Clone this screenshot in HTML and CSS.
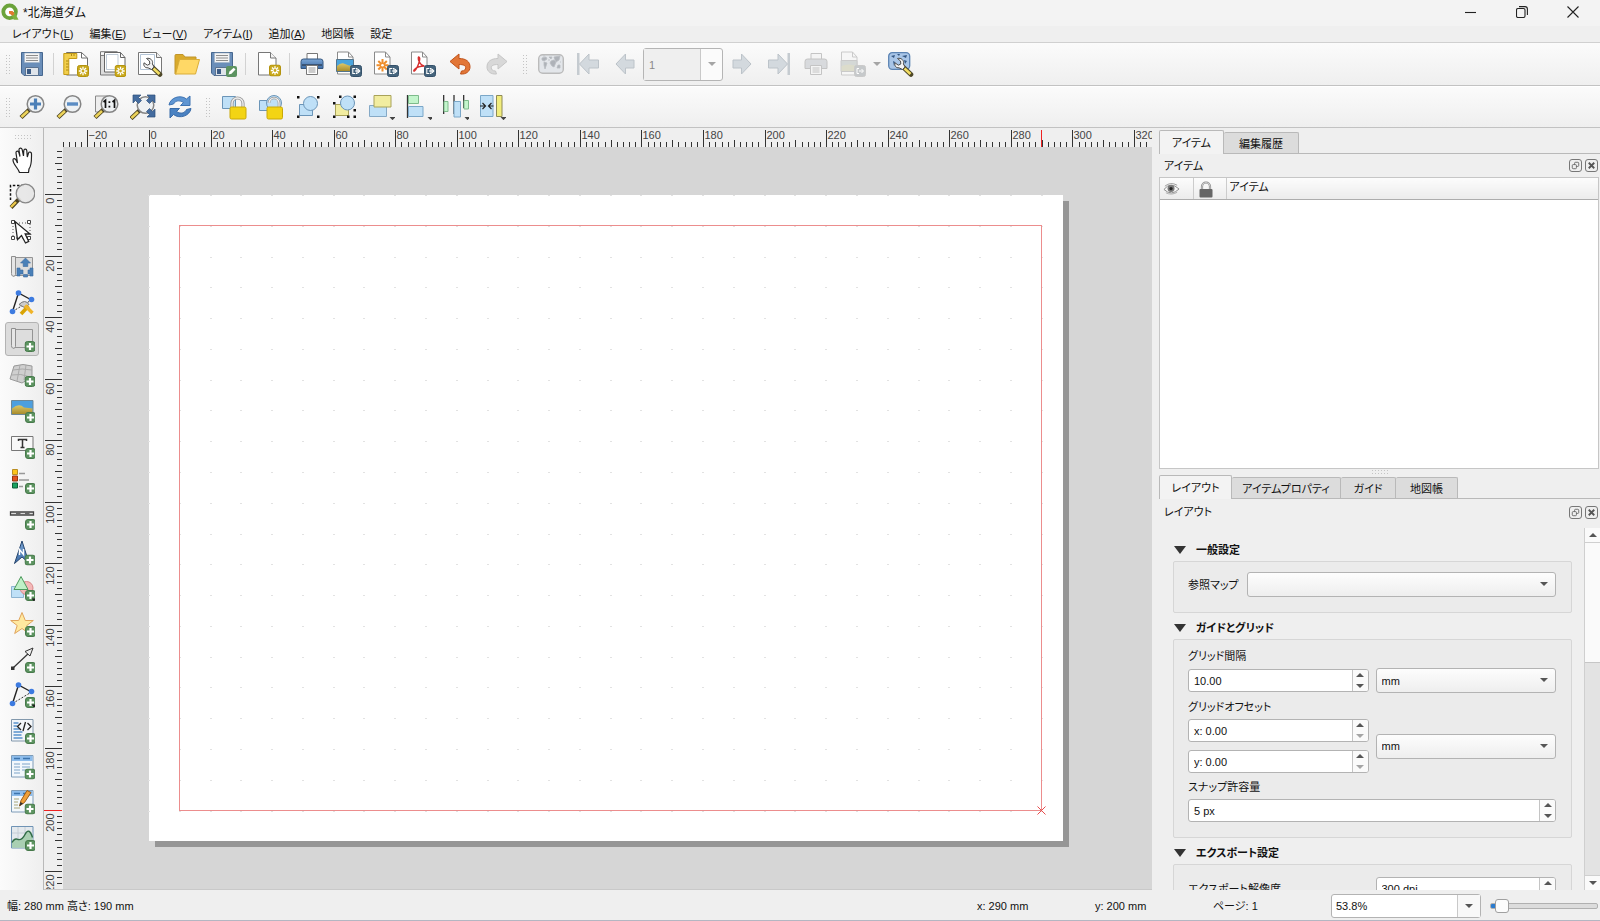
FILE: index.html
```html
<!DOCTYPE html>
<html lang="ja">
<head>
<meta charset="utf-8">
<title>*北海道ダム</title>
<link rel="stylesheet" href="styles.css">
</head>
<body>
<svg class="sprite" aria-hidden="true">
  <defs>
    <linearGradient id="gold" x1="0" y1="0" x2="0" y2="1"><stop offset="0" stop-color="#e3c84a"/><stop offset="1" stop-color="#b8960f"/></linearGradient>
    <linearGradient id="blue" x1="0" y1="0" x2="0" y2="1"><stop offset="0" stop-color="#7ba6d6"/><stop offset="1" stop-color="#3d6ca6"/></linearGradient>
    <linearGradient id="land" x1="0" y1="0" x2="0" y2="1"><stop offset="0" stop-color="#ddc768"/><stop offset="1" stop-color="#a88c2c"/></linearGradient>
  </defs>
  <symbol id="b-new" viewBox="0 0 12 12"><rect x=".5" y=".5" width="11" height="11" rx="2" fill="#c9a91c" stroke="#b3930f"/><path d="M6 1.8v8.4M1.8 6h8.4M3 3l6 6M9 3l-6 6" stroke="#fff" stroke-width="1.3"/><circle cx="6" cy="6" r="1.4" fill="#c9a91c"/></symbol>
  <symbol id="b-add" viewBox="0 0 11 11"><rect x=".5" y=".5" width="10" height="10" rx="2.5" fill="#5c9360" stroke="#47794b"/><path d="M5.5 2v7M2 5.5h7" stroke="#fff" stroke-width="2.2"/></symbol>
  <symbol id="b-exp" viewBox="0 0 12 12"><rect x=".5" y=".5" width="11" height="11" rx="2" fill="#45647c" stroke="#34516a"/><path d="M5.300 3.500H2.800v5h2.500M6 3.500h1v5H6M5 6h4.500M8 4.200L9.800 6 8 7.800" fill="none" stroke="#fff" stroke-width="1.1"/></symbol>
  <symbol id="glass" viewBox="0 0 26 26"><path d="M11 15l-9 8.5" stroke="#4a4020" stroke-width="4.4"/><path d="M9 17l-6.600 6" stroke="#ecd35a" stroke-width="2.600"/><circle cx="16.500" cy="10" r="8.300" fill="#eef1f3" stroke="#858585" stroke-width="1.500"/></symbol>
  <symbol id="wrench" viewBox="0 0 26 26"><path d="M13 14l9 8.500" stroke="#4d4727" stroke-width="4.600" stroke-linecap="round"/><path d="M15.500 16.500l6 5.500" stroke="#f2dd63" stroke-width="2.600"/><path d="M8.500 6.500l3 2.500.3 3-2.500 1.200-3.300-2.400c-.8 3 1 5.300 4 5l3.500 1.700 2.500-2.600-1.600-3c1-3.500-2.300-6.500-5.900-5.400z" fill="#f4f4f4" stroke="#4b4b4b"/></symbol>
  <symbol id="i-qgis" viewBox="0 0 18 18"><circle cx="8.600" cy="8.800" r="6.300" fill="#fff" stroke="#6ba33a" stroke-width="3.800"/><path d="M9 9h4.500l4 7.800h-4.800z" fill="#7fb23f"/><path d="M8 8h3.500l2 2.600-1.500 2.200L8 10.500z" fill="#e2792f"/></symbol>
  <symbol id="i-save" viewBox="0 0 26 26"><path d="M2.500 1.500h21v23H5l-2.500-2.500z" fill="#6a8eb9" stroke="#46678f"/><path d="M5.500 2h15v9.500h-15z" fill="#f4f4f4" stroke="#9fb1c6" stroke-width=".6"/><path d="M7 4.500h12M7 7h12M7 9.500h12" stroke="#8d8d8d"/><path d="M6.500 16.500h13v8h-13z" fill="#dfe4ea" stroke="#5a7290"/><path d="M8 18h4v5H8z" fill="#3c5c86"/></symbol>
  <symbol id="i-savet" viewBox="0 0 26 26"><use href="#i-save" x="-2" y="0" width="26" height="26"/><rect x="15" y="15" width="11" height="11" rx="2" fill="#5c9360"/><path d="M17.500 23.500l1-3 4.200-3.800 1.800 1.800-4 4.200z" fill="#fff"/></symbol>
  <symbol id="i-new" viewBox="0 0 26 26"><path d="M3.500 1.500h15l6 5.500v17h-21z" fill="#fff" stroke="#6f6f6f"/><path d="M18.500 1.500V7h6" fill="none" stroke="#6f6f6f"/><path d="M.8 2.500h13v5h-8v16h-5z" fill="#f2cf4c" stroke="#c39a16"/><path d="M3 10h2.500M3 13h2.500M3 16h2.500M3 19h2.500M8.500 3v2M11 3v2" stroke="#a6820f" stroke-width=".9"/><use href="#b-new" x="14" y="14" width="12" height="12"/></symbol>
  <symbol id="i-dup" viewBox="0 0 26 26"><path d="M.5 4.500V24h18V4z" fill="#ddd" stroke="#777"/><path d="M.5 24V.7h17" fill="none" stroke="#777"/><path d="M4.500 1.500h16l4.500 5v14.500H4.500z" fill="#fff" stroke="#666"/><path d="M20.500 1.500v5H25" fill="none" stroke="#666"/><path d="M6.500 3.500H18v15H6.500z" fill="#fff" stroke="#aebecd" stroke-width=".8"/><use href="#b-new" x="14.500" y="14" width="12" height="12"/></symbol>
  <symbol id="i-mgr" viewBox="0 0 26 26"><path d="M1.500 1.500h18l5 5v17h-23z" fill="#fff" stroke="#777"/><path d="M3.500 3.500h14v15h-14z" fill="none" stroke="#b3c4d6"/><path d="M19.500 1.500v5h5" fill="#eee" stroke="#777"/><use href="#wrench" x="1" y="1" width="26" height="26"/></symbol>
  <symbol id="i-open" viewBox="0 0 26 26"><path d="M1 4.500q0-1 1-1h7l2 2.500h11v4H5L2.500 23H1z" fill="#d9aa2b" stroke="#c1952a"/><path d="M5.500 8.500h20l-4 14.500H1.700z" fill="#ffd866" stroke="#d9ad38"/></symbol>
  <symbol id="i-page" viewBox="0 0 26 26"><path d="M3.500 1.500h12l5.500 5.500v17H3.500z" fill="#fff" stroke="#777"/><path d="M15.500 1.500V7H21" fill="#f3f3f3" stroke="#777"/><use href="#b-new" x="14" y="13.500" width="12" height="12"/></symbol>
  <symbol id="i-print" viewBox="0 0 26 26"><path d="M8 2.500h10.500V9H8z" fill="#fff" stroke="#777"/><path d="M4.500 8h17q2.500 0 2.500 2.500v7H2v-7Q2 8 4.500 8z" fill="url(#blue)" stroke="#34567e"/><path d="M3 14h20" stroke="#32465f" stroke-width="1.500"/><path d="M7.500 14.500h11v9h-11z" fill="#fff" stroke="#777"/><path d="M9.500 17h7M9.500 19h7M9.500 21h7" stroke="#999"/></symbol>
  <symbol id="p-page" viewBox="0 0 26 26"><path d="M1.500 1h11L17 6v17H1.500z" fill="#fff" stroke="#8a8a8a"/><path d="M12.500 1v5H17" fill="none" stroke="#8a8a8a"/></symbol>
  <symbol id="i-img" viewBox="0 0 26 26"><use href="#p-page" width="26" height="26"/><path d="M.5 8.500h17v12H.5z" fill="#4aa4dd" stroke="#54748b"/><path d="M1 15q4-4 8-2t8 2v5H1z" fill="url(#land)"/><use href="#b-exp" x="14" y="14" width="12" height="12"/></symbol>
  <symbol id="i-svg" viewBox="0 0 26 26"><use href="#p-page" width="26" height="26"/><path d="M9.500 8v12.500M3.500 14.300h12M5.300 10l8.500 8.500M13.800 10l-8.500 8.500" stroke="#ef8f2d" stroke-width="2"/><circle cx="9.500" cy="14.300" r="1.300" fill="#fff"/><use href="#b-exp" x="14" y="14" width="12" height="12"/></symbol>
  <symbol id="i-pdf" viewBox="0 0 26 26"><use href="#p-page" width="26" height="26"/><path d="M8.500 6q2 0 .8 4.500Q7.500 17 4.500 20q-1.500.5 0-1.500 3.500-3.500 10-3.500-4-.5-6-6Q8 6.500 8.500 6z" fill="none" stroke="#d7302f" stroke-width="1.400"/><use href="#b-exp" x="14" y="14" width="12" height="12"/></symbol>
  <symbol id="i-undo" viewBox="0 0 26 26"><path d="M3 10.500L12 3v4.500c7 0 11 3 11 8.500 0 4.500-4 7.500-9.500 7l1-3c3 0 4.200-1.500 4.200-3.300 0-2.200-2.200-3.200-6.700-3.200V18z" fill="#e27637" stroke="#c1531a"/></symbol>
  <symbol id="i-redo" viewBox="0 0 26 26"><path d="M23 10.500L14 3v4.500c-7 0-11 3-11 8.500 0 4.500 4 7.500 9.500 7l-1-3c-3 0-4.200-1.500-4.200-3.300 0-2.200 2.200-3.200 6.700-3.200V18z" fill="#d8d8d8" stroke="#c6c6c6"/></symbol>
  <symbol id="i-atlas" viewBox="0 0 26 26"><rect x=".7" y="3.700" width="24.600" height="18.600" rx="4" fill="#e3e6ea" stroke="#bbb" stroke-width="1.400"/><path d="M4 7l4-1 1 2-3 2-2-1zM6 11l3 1-1 3-1 3-1-4zM11 6h3l-1 2zM13 10l3-1 2 2-2 5-2-1-2-3zM16 6l6-1-1 4-3 2-1-2zM20 14h2v3h-3zM5 5h2M10 9h2M22 11h1" fill="#aeb2b8" stroke="#b9bdc2" stroke-width=".8"/></symbol>
  <symbol id="i-first" viewBox="0 0 26 26"><path d="M2 2h2.500v22H2z" fill="#c5cbd0"/><path d="M4.500 13L14 3v6h9.500v8H14v6z" fill="#d3d9de" stroke="#bcc3c9"/></symbol>
  <symbol id="i-prev" viewBox="0 0 26 26"><path d="M4 13l9.500-10v6H22v8h-8.500v6z" fill="#d3d9de" stroke="#bcc3c9"/></symbol>
  <symbol id="i-next" viewBox="0 0 26 26"><path d="M22 13L12.500 3v6H4v8h8.500v6z" fill="#d3d9de" stroke="#bcc3c9"/></symbol>
  <symbol id="i-last" viewBox="0 0 26 26"><path d="M21.500 2H24v22h-2.500z" fill="#c5cbd0"/><path d="M21.500 13L12 3v6H2.500v8H12v6z" fill="#d3d9de" stroke="#bcc3c9"/></symbol>
  <symbol id="i-pgray" viewBox="0 0 26 26"><g stroke="#c4c4c4"><path d="M8 2.500h10.500V9H8z" fill="#f4f4f4"/><path d="M4.500 8h17q2.500 0 2.500 2.500v7H2v-7Q2 8 4.500 8z" fill="#d8dadd"/><path d="M7.500 14.500h11v9h-11z" fill="#f4f4f4"/><path d="M9.500 17h7M9.500 19h7M9.500 21h7"/></g></symbol>
  <symbol id="i-igray" viewBox="0 0 26 26"><g stroke="#cacaca"><path d="M1.500 1h11L17 6v18H1.500z" fill="#f6f6f6"/><path d="M12.500 1v5H17" fill="none"/><path d="M1 9.500h16v11H1z" fill="#d4d8d6"/><path d="M1.500 15q7-3 15 0v5h-15z" fill="#dcdccb" stroke="none"/><rect x="14.500" y="14.500" width="11" height="11" rx="2" fill="#c6c9cb"/></g><path d="M19 17.500h-2v5h2M19 20h4M21.500 18l2 2-2 2" fill="none" stroke="#fff"/></symbol>
  <symbol id="i-aset" viewBox="0 0 26 26"><rect x=".7" y="1.700" width="21" height="16.600" rx="3.500" fill="#a9c6e8" stroke="#5b83b3" stroke-width="1.300"/><path d="M3 5l4-1-1 3zM9 3h3l-1 2zM5 10l2 1-1 4zM14 5l5-1-1 3zM16 9l3 1-2 3z" fill="#345783"/><use href="#wrench" x="1" y="1" width="26" height="26"/></symbol>

  <symbol id="i-zin" viewBox="0 0 26 26"><use href="#glass" width="26" height="26"/><path d="M16.500 4.500v11M11 10h11" stroke="#4c80b8" stroke-width="3.200"/></symbol>
  <symbol id="i-zout" viewBox="0 0 26 26"><use href="#glass" width="26" height="26"/><path d="M11 10h11" stroke="#5a8cc3" stroke-width="3.400"/></symbol>
  <symbol id="i-z1" viewBox="0 0 26 26"><path d="M2.500 2h13v16h-13z" fill="#eee" stroke="#8a8a8a"/><use href="#glass" width="26" height="26"/><path d="M10.500 8l2-1.700V14M19.500 8l2-1.700V14" fill="none" stroke="#111" stroke-width="1.700"/><path d="M15.500 8.200h1.800M15.500 12.700h1.800" stroke="#111" stroke-width="1.700"/></symbol>
  <symbol id="i-zfull" viewBox="0 0 26 26"><use href="#glass" x="-1" y="1" width="26" height="26"/><g fill="#446c9f" stroke="#2d4f7a" stroke-width=".7"><path d="M3 1h8L8.500 3.500l3 3-3 3-3-3L3 9zM25 1h-8l2.500 2.500-3 3 3 3 3-3L25 9zM25 23h-8l2.500-2.500-3-3 3-3 3 3L25 15z"/></g></symbol>
  <symbol id="i-refresh" viewBox="0 0 26 26"><path d="M2 11C3 4 13 0 19.500 5L23 2v9.500h-9.500l3-3C12 5.500 8 7 6.500 10z" fill="#5e95d2" stroke="#3f74b3"/><path d="M24 14.500c-1 7-11 11-17.500 6L3 24v-9.500h9.500l-3 3c4.500 3 8.500 1.500 10-2z" fill="#4a82c2" stroke="#376aa8"/></symbol>
  <symbol id="p-lock" viewBox="0 0 26 26"><path d="M10 14.500V9.500a5.500 5.500 0 0 1 11 0v5" fill="none" stroke="#999" stroke-width="3.200"/><path d="M10 14.500V9.500a5.500 5.500 0 0 1 11 0v5" fill="none" stroke="#eee" stroke-width="1.400"/><rect x="8" y="13" width="16" height="12" rx="1.500" fill="#f3d414" stroke="#c9a808"/></symbol>
  <symbol id="i-lock" viewBox="0 0 26 26"><path d="M1.500 2.500h13v12h-13z" fill="#bfe0f7" stroke="#6b95b8"/><use href="#p-lock" x="1" width="26" height="26"/></symbol>
  <symbol id="i-unlock" viewBox="0 0 26 26"><path d="M1.500 6.500h12v10h-12z" fill="#bfe0f7" stroke="#6b95b8"/><circle cx="16" cy="9" r="7.500" fill="#bfe0f7" stroke="#6b95b8"/><path d="M11 9a5 5 0 0 1 10 0v5" fill="none" stroke="#999" stroke-width="2.600"/><path d="M11 9a5 5 0 0 1 10 0v5" fill="none" stroke="#f3f3f3" stroke-width="1.200"/><rect x="9" y="13" width="15.500" height="12" rx="1.500" fill="#f3d414" stroke="#c9a808"/></symbol>
  <symbol id="i-group" viewBox="0 0 26 26"><path d="M4.500 10.500h13v11h-13z" fill="#bfe0f7" stroke="#6b95b8"/><circle cx="15.500" cy="9.500" r="7" fill="#bfe0f7" stroke="#6b95b8"/><path d="M2 2h2.500v2.500H2zM22 2h2.500v2.500H22zM2 21.500h2.500V24H2zM22 21.500h2.500V24H22z" fill="#111"/></symbol>
  <symbol id="i-ungroup" viewBox="0 0 26 26"><path d="M3.500 10.500h13v11h-13z" fill="#f2eda0" stroke="#a9a35a"/><circle cx="15.500" cy="9" r="7" fill="#bfe0f7" stroke="#6b95b8"/><path d="M7 1.500h2.500V4H7zM21.500 1.500H24V4h-2.500zM1 8h2.500v2.500H1zM1 21.500h2.500V24H1zM15 21.500h2.500V24H15zM21.500 15H24v2.500h-2.500zM21.500 21.500H24V24h-2.500z" fill="#111"/></symbol>
  <symbol id="i-raise" viewBox="0 0 26 26"><path d="M.5 11.500h17v11H.5z" fill="#bfe0f7" stroke="#85a9c6"/><path d="M5 1.500h17v11.500H5z" fill="#f2eda0" stroke="#a9a35a"/><path d="M20.500 23h6l-3 3.200z" fill="#444"/></symbol>
  <symbol id="i-align" viewBox="0 0 26 26"><path d="M1.500 1v23" stroke="#333" stroke-width="1.300"/><path d="M2.500 1.500h10v8h-10z" fill="#c3f5cc" stroke="#7ebb8c"/><path d="M2.500 12.500H17v10H2.500z" fill="#bfe0f7" stroke="#7ba7c8"/><path d="M21.500 23h6l-3 3.200z" fill="#444"/></symbol>
  <symbol id="i-dist" viewBox="0 0 26 26"><path d="M.7 1v19M11 1v19M20.700 1v13" stroke="#222" stroke-width="1.200"/><path d="M1 7.500h4v10H1zM21 6.500h4.500V15H21z" fill="#c3f5cc" stroke="#7ebb8c"/><path d="M11 7.500h6.500V23H11z" fill="#bfe0f7" stroke="#7ba7c8"/><path d="M21.500 23h6l-3 3.200z" fill="#444"/></symbol>
  <symbol id="i-resize" viewBox="0 0 26 26"><path d="M.5 1.500h12.500v21H.5z" fill="#bfe0f7" stroke="#7ba7c8"/><path d="M16.500 1.500h5.500v21h-5.500z" fill="#f2ed7c" stroke="#8f8a55"/><path d="M0 12h4.500M2.500 9l3 3-3 3M13.500 12H9M11.500 9l-3 3 3 3" fill="none" stroke="#222" stroke-width="1.200"/><path d="M20.500 23h6l-3 3.200z" fill="#444"/></symbol>

  <symbol id="i-pan" viewBox="0 0 26 26"><path d="M10.500 25.500c-1-4-6.500-8-6.500-12.500 0-2 2.200-2 3.200.3L8.500 16 7 6c-.2-2.200 2.300-2.600 2.900-.4L11 9.500 10 3c-.2-2.300 2.600-2.600 3.200-.4L14.500 9l.3-5.500c.3-2 2.800-1.800 3 .2L18.300 10l1.200-4c.7-1.600 3-1.200 3 .8 0 6.500.3 12-2.500 15l-.5 3.700z" fill="#fff" stroke="#222" stroke-width="1.200"/></symbol>
  <symbol id="i-zoom" viewBox="0 0 26 26"><path d="M1.500 17V2.500H15" fill="none" stroke="#111" stroke-width="1.500" stroke-dasharray="2.500 1.700"/><path d="M11 15l-9 9.500" stroke="#4a4020" stroke-width="4"/><path d="M7 19l-5 5" stroke="#ecc94a" stroke-width="2.400"/><circle cx="16.500" cy="10.500" r="9.300" fill="#e6e6e6" fill-opacity=".92" stroke="#888" stroke-width="1.300"/></symbol>
  <symbol id="i-select" viewBox="0 0 26 26"><path d="M4 4h17v15H4z" fill="none" stroke="#555" stroke-dasharray="1 2"/><path d="M2.500 1.500h3v3h-3zM18.500 1.500h3v3h-3zM2.500 17.500h3v3h-3zM18.500 17.500h3v3h-3z" fill="#fff" stroke="#444"/><path d="M6 2.500l2.500 18 4-4 4 7.500 3.200-1.600L16.200 15H21z" fill="#fff" stroke="#222" stroke-width="1.300"/></symbol>
  <symbol id="p-map" viewBox="0 0 26 26"><path d="M5.500 3.500h18v18h-18z" fill="#ddd" stroke="#949494"/><path d="M2.500 2.500h4v18q-1 3-3 1.500-1-.7-1-2.500z" fill="#e6e6e6" stroke="#8f8f8f"/></symbol>
  <symbol id="i-move" viewBox="0 0 26 26"><use href="#p-map" width="26" height="26"/><path d="M16.500 4l5 5h-2.700v3.500h-4.600V9h-2.700zM8 14h3v2h3v4h-3v2H8zM24 14v8h-3v-2h-2v-4h2v-2zM14.500 20.500h4V23h-4z" fill="#4a80b8" stroke="#3a6a9d" stroke-width=".6"/></symbol>
  <symbol id="p-nodes" viewBox="0 0 26 26"><path d="M3.500 21.500L9.500 3l13 7" fill="none" stroke="#222" stroke-width="1.400"/><path d="M3.500 21.500L22.500 10" stroke="#333" stroke-dasharray="2 1.500"/><circle cx="3.500" cy="21.500" r="2.800" fill="#3d7be0"/><circle cx="9.500" cy="3" r="2.800" fill="#3d7be0"/><circle cx="22.500" cy="9.500" r="2.800" fill="#3d7be0"/></symbol>
  <symbol id="i-nodes" viewBox="0 0 26 26"><use href="#p-nodes" width="26" height="26"/><path d="M10 14.500q6-6 10 0l-4.500 3z" fill="#ccc" stroke="#777"/><path d="M12 24l7.500-8" stroke="#d9a404" stroke-width="3.600"/><path d="M16 15.500l7.500 7.500" stroke="#f0b429" stroke-width="3.400"/></symbol>
  <symbol id="i-map" viewBox="0 0 26 26"><use href="#p-map" width="26" height="26"/><use href="#b-add" x="15.500" y="15" width="11" height="11"/></symbol>
  <symbol id="i-map3d" viewBox="0 0 26 26"><path d="M5 5q9-3 18 0v11L13 22 1 18z" fill="#cfcfcf" stroke="#999"/><path d="M4 9q9-2 19 0M2.500 14q9-2 19 2M11 4L8 20M17 4l-2 15" fill="none" stroke="#aaa"/><use href="#b-add" x="15.500" y="15" width="11" height="11"/></symbol>
  <symbol id="i-pic" viewBox="0 0 26 26"><path d="M2.500 3.500h21.500v14H2.500z" fill="#4d9fdf" stroke="#6d8797"/><path d="M3 11.500q7-6 12-1 5 .5 8.500 1V17H3z" fill="url(#land)"/><use href="#b-add" x="16" y="15" width="11" height="11"/></symbol>
  <symbol id="i-label" viewBox="0 0 26 26"><path d="M2.500 3.500h21.500v14H2.500z" fill="#f8f8f8" stroke="#777"/><path d="M9.500 8V6.500h8V8M13.500 6.500v8M11.500 14.500h4" fill="none" stroke="#333" stroke-width="1.500"/><use href="#b-add" x="16" y="15" width="11" height="11"/></symbol>
  <symbol id="i-legend" viewBox="0 0 26 26"><path d="M3.500 1.500h5v5h-5z" fill="#fcc419" stroke="#b98d22"/><path d="M3.500 8h5v5h-5z" fill="#e2511d" stroke="#94340f"/><path d="M3.500 15h5v5h-5z" fill="#1aa260" stroke="#0f5f38"/><path d="M10 5.500h6M10 12h10M10 18.500h4" stroke="#999" stroke-width="1.600"/><use href="#b-add" x="16" y="15" width="11" height="11"/></symbol>
  <symbol id="i-scale" viewBox="0 0 26 26"><path d="M1.500 8h23v3h-23z" fill="#ddd" stroke="#444" stroke-width="1.300"/><path d="M7 8h4.500v3H7zM16 8h4.500v3H16z" fill="#666"/><use href="#b-add" x="16" y="15" width="11" height="11"/></symbol>
  <symbol id="i-north" viewBox="0 0 26 26"><path d="M13 1l7 22-7-6-7.500 6.500z" fill="url(#blue)" stroke="#27466e"/><path d="M10.500 15V9.500l4 5V9" fill="none" stroke="#fff" stroke-width="1.400"/><use href="#b-add" x="15.500" y="14.500" width="11" height="11"/></symbol>
  <symbol id="i-shape" viewBox="0 0 26 26"><path d="M2.500 11.500h12v11h-12z" fill="#bfe0f7" stroke="#8db4d1"/><circle cx="17.500" cy="13" r="6.500" fill="#f4b8b8" stroke="#d98989"/><path d="M12 1.500l7 13H5z" fill="#bff0c7" stroke="#4d9a5c"/><use href="#b-add" x="16" y="15" width="11" height="11"/><path d="M22.500 23.500h5l-2.500 3z" fill="#222"/></symbol>
  <symbol id="i-star" viewBox="0 0 26 26"><path d="M13 1.500l3.300 8h8l-6.500 5 2.500 8-7.300-5-7.300 5 2.500-8-6.500-5h8z" fill="#ffe9a0" stroke="#e0a45c"/><use href="#b-add" x="16" y="15" width="11" height="11"/></symbol>
  <symbol id="i-arrow" viewBox="0 0 26 26"><path d="M4 21L21 5" stroke="#333" stroke-width="1.200"/><path d="M2 19.500h3.500V23H2z" fill="#333"/><path d="M16 4.500L24 1l-3 8z" fill="#eee" stroke="#333"/><use href="#b-add" x="16" y="15" width="11" height="11"/></symbol>
  <symbol id="i-addnodes" viewBox="0 0 26 26"><use href="#p-nodes" width="26" height="26"/><use href="#b-add" x="16" y="15" width="11" height="11"/><path d="M22.500 22.500h5l-2.500 3z" fill="#222"/></symbol>
  <symbol id="i-html" viewBox="0 0 26 26"><path d="M2.500 1.500h21.500v21.500H2.500z" fill="#f3f6f9" stroke="#8298ac"/><path d="M4.500 5h5M4.500 8h4M4.500 11h6M4.500 14h9M4.500 17h8M4.500 20h9" stroke="#5a93cc" stroke-width="1.600"/><path d="M12 5L8.500 8.500 12 12M18.500 5L22 8.500 18.500 12M16.500 4l-2.500 9" fill="none" stroke="#222" stroke-width="1.300"/><use href="#b-add" x="16" y="15" width="11" height="11"/></symbol>
  <symbol id="p-table" viewBox="0 0 26 26"><path d="M2.500 1.500h21.500v21.500H2.500z" fill="#f3f8fc" stroke="#7e9cb8"/><path d="M3 2h20.500v5H3z" fill="#8dbdec"/><path d="M5 4.500h6M14 4.500h7" stroke="#3c74ad" stroke-width="1.400"/></symbol>
  <symbol id="i-table" viewBox="0 0 26 26"><use href="#p-table" width="26" height="26"/><path d="M5 10h6M13 10h8M5 13h6M13 13h8M5 16h6M13 16h3M5 19h6" stroke="#7fa4c8" stroke-width="1.200"/><use href="#b-add" x="15.500" y="14.500" width="11" height="11"/></symbol>
  <symbol id="i-mtable" viewBox="0 0 26 26"><use href="#p-table" width="26" height="26"/><path d="M5 10h5M5 13h4M5 16h4M5 19h6" stroke="#a9a57a" stroke-width="1.200"/><path d="M10.500 17l1.500-5.500 6-10 4 2-6.500 10z" fill="#f0a03a" stroke="#9a5c16"/><path d="M10.500 17l1-4 2.600 1.500z" fill="#333"/><use href="#b-add" x="15.500" y="14.500" width="11" height="11"/></symbol>
  <symbol id="i-elev" viewBox="0 0 26 26"><path d="M2.500 1.500h21.500v21.500H2.500z" fill="#e4e9ed" stroke="#6f93b5"/><path d="M9 2v20M16 2v20M3 8h21M3 15h21" stroke="#c6ced6"/><path d="M3 17.500q3-5 6-3 4 1 7-5 4-8 7.500 3v10.300H3z" fill="#a9cfb2"/><path d="M3 17.500q3-5 6-3 4 1 7-5 4-8 7.500 3" fill="none" stroke="#2f6b45" stroke-width="1.400"/><use href="#b-add" x="16" y="15" width="11" height="11"/></symbol>
</svg>

<div class="window">
  <header class="titlebar">
    <svg class="logo" aria-hidden="true"><use href="#i-qgis"/></svg>
    <h1 class="title">*北海道ダム</h1>
    <div class="winbtns">
      <button type="button" class="winbtn" aria-label="最小化"><svg viewBox="0 0 12 12"><path d="M0 6.500h11"/></svg></button>
      <button type="button" class="winbtn" aria-label="元に戻す"><svg viewBox="0 0 12 12"><rect x=".5" y="2.500" width="8.500" height="9" rx="1.500"/><path d="M3 .6h6q2.400 0 2.400 2.400v6"/></svg></button>
      <button type="button" class="winbtn" aria-label="閉じる"><svg viewBox="0 0 12 12"><path d="M.5.5l11 11M11.500.5L.5 11.500"/></svg></button>
    </div>
  </header>

  <nav class="menubar">
    <button type="button" class="menu">レイアウト(<u>L</u>)</button>
    <button type="button" class="menu">編集(<u>E</u>)</button>
    <button type="button" class="menu">ビュー(<u>V</u>)</button>
    <button type="button" class="menu">アイテム(<u>I</u>)</button>
    <button type="button" class="menu">追加(<u>A</u>)</button>
    <button type="button" class="menu">地図帳</button>
    <button type="button" class="menu">設定</button>
  </nav>

  <div class="toolbar first" role="toolbar" aria-label="レイアウト">
    <span class="grip"></span>
    <button type="button" class="tool" aria-label="保存"><svg><use href="#i-save"/></svg></button>
    <span class="sep"></span>
    <button type="button" class="tool" aria-label="新規レイアウト"><svg><use href="#i-new"/></svg></button>
    <button type="button" class="tool" aria-label="レイアウトを複製"><svg><use href="#i-dup"/></svg></button>
    <button type="button" class="tool" aria-label="レイアウトマネージャ"><svg><use href="#i-mgr"/></svg></button>
    <button type="button" class="tool" aria-label="テンプレートを開く"><svg><use href="#i-open"/></svg></button>
    <button type="button" class="tool" aria-label="テンプレートとして保存"><svg><use href="#i-savet"/></svg></button>
    <span class="sep"></span>
    <button type="button" class="tool" aria-label="ページを追加"><svg><use href="#i-page"/></svg></button>
    <span class="sep"></span>
    <button type="button" class="tool" aria-label="印刷"><svg><use href="#i-print"/></svg></button>
    <button type="button" class="tool" aria-label="画像としてエクスポート"><svg><use href="#i-img"/></svg></button>
    <button type="button" class="tool" aria-label="SVGとしてエクスポート"><svg><use href="#i-svg"/></svg></button>
    <button type="button" class="tool" aria-label="PDFとしてエクスポート"><svg><use href="#i-pdf"/></svg></button>
    <button type="button" class="tool" aria-label="元に戻す"><svg><use href="#i-undo"/></svg></button>
    <button type="button" class="tool" aria-label="やり直す" disabled><svg><use href="#i-redo"/></svg></button>
    <span class="grip mid"></span>
    <button type="button" class="tool" aria-label="地図帳プレビュー" disabled><svg><use href="#i-atlas"/></svg></button>
    <button type="button" class="tool" aria-label="最初の地物" disabled><svg><use href="#i-first"/></svg></button>
    <button type="button" class="tool" aria-label="前の地物" disabled><svg><use href="#i-prev"/></svg></button>
    <div class="pagecombo">
      <input type="text" class="pageinput" value="1" aria-label="地図帳ページ" disabled>
      <button type="button" class="pagedrop" aria-label="一覧" disabled><span class="tri down pale"></span></button>
    </div>
    <button type="button" class="tool" aria-label="次の地物" disabled><svg><use href="#i-next"/></svg></button>
    <button type="button" class="tool" aria-label="最後の地物" disabled><svg><use href="#i-last"/></svg></button>
    <button type="button" class="tool" aria-label="地図帳を印刷" disabled><svg><use href="#i-pgray"/></svg></button>
    <button type="button" class="tool" aria-label="地図帳をエクスポート" disabled><svg><use href="#i-igray"/></svg></button>
    <button type="button" class="more" aria-label="エクスポート形式" disabled><span class="tri down pale"></span></button>
    <button type="button" class="tool" aria-label="地図帳の設定"><svg><use href="#i-aset"/></svg></button>
  </div>

  <div class="toolbar" role="toolbar" aria-label="ナビゲーションと操作">
    <span class="grip"></span>
    <button type="button" class="tool" aria-label="拡大"><svg><use href="#i-zin"/></svg></button>
    <button type="button" class="tool" aria-label="縮小"><svg><use href="#i-zout"/></svg></button>
    <button type="button" class="tool" aria-label="100%表示"><svg><use href="#i-z1"/></svg></button>
    <button type="button" class="tool" aria-label="全域表示"><svg><use href="#i-zfull"/></svg></button>
    <button type="button" class="tool" aria-label="再読み込み"><svg><use href="#i-refresh"/></svg></button>
    <span class="grip mid"></span>
    <button type="button" class="tool" aria-label="ロック"><svg><use href="#i-lock"/></svg></button>
    <button type="button" class="tool" aria-label="ロック解除"><svg><use href="#i-unlock"/></svg></button>
    <button type="button" class="tool" aria-label="グループ化"><svg><use href="#i-group"/></svg></button>
    <button type="button" class="tool" aria-label="グループ解除"><svg><use href="#i-ungroup"/></svg></button>
    <button type="button" class="tool" aria-label="前面へ"><svg><use href="#i-raise"/></svg></button>
    <button type="button" class="tool" aria-label="整列"><svg><use href="#i-align"/></svg></button>
    <button type="button" class="tool" aria-label="分布"><svg><use href="#i-dist"/></svg></button>
    <button type="button" class="tool" aria-label="リサイズ"><svg><use href="#i-resize"/></svg></button>
  </div>

  <main class="work">
    <div class="toolbox" role="toolbar" aria-label="ツールボックス">
      <span class="grip flat"></span>
      <div class="tools">
        <button type="button" class="vtool" aria-label="パン"><svg><use href="#i-pan"/></svg></button>
        <button type="button" class="vtool" aria-label="ズーム"><svg><use href="#i-zoom"/></svg></button>
        <button type="button" class="vtool" aria-label="アイテムを選択"><svg><use href="#i-select"/></svg></button>
        <button type="button" class="vtool" aria-label="コンテンツを移動"><svg><use href="#i-move"/></svg></button>
        <button type="button" class="vtool" aria-label="ノードを編集"><svg><use href="#i-nodes"/></svg></button>
        <button type="button" class="vtool pressed" aria-label="地図を追加" aria-pressed="true"><svg><use href="#i-map"/></svg></button>
        <button type="button" class="vtool" aria-label="3D地図を追加"><svg><use href="#i-map3d"/></svg></button>
        <button type="button" class="vtool" aria-label="画像を追加"><svg><use href="#i-pic"/></svg></button>
        <button type="button" class="vtool" aria-label="ラベルを追加"><svg><use href="#i-label"/></svg></button>
        <button type="button" class="vtool" aria-label="凡例を追加"><svg><use href="#i-legend"/></svg></button>
        <button type="button" class="vtool" aria-label="スケールバーを追加"><svg><use href="#i-scale"/></svg></button>
        <button type="button" class="vtool" aria-label="方位記号を追加"><svg><use href="#i-north"/></svg></button>
        <button type="button" class="vtool" aria-label="図形を追加"><svg><use href="#i-shape"/></svg></button>
        <button type="button" class="vtool" aria-label="マーカーを追加"><svg><use href="#i-star"/></svg></button>
        <button type="button" class="vtool" aria-label="矢印を追加"><svg><use href="#i-arrow"/></svg></button>
        <button type="button" class="vtool" aria-label="ノードアイテムを追加"><svg><use href="#i-addnodes"/></svg></button>
        <button type="button" class="vtool" aria-label="HTMLを追加"><svg><use href="#i-html"/></svg></button>
        <button type="button" class="vtool" aria-label="固定テーブルを追加"><svg><use href="#i-table"/></svg></button>
        <button type="button" class="vtool" aria-label="属性テーブルを追加"><svg><use href="#i-mtable"/></svg></button>
        <button type="button" class="vtool" aria-label="断面図を追加"><svg><use href="#i-elev"/></svg></button>
      </div>
    </div>

    <section class="view" aria-label="レイアウトキャンバス">
      <svg class="ruler-h" id="ruler-h"></svg>
      <svg class="ruler-v" id="ruler-v"></svg>
      <svg class="canvas" id="canvas"></svg>
    </section>

    <aside class="side">
      <section class="dock items">
        <div class="tabs" role="tablist">
          <button type="button" class="tab active t-items" role="tab" aria-selected="true">アイテム</button>
          <button type="button" class="tab t-history" role="tab">編集履歴</button>
        </div>
        <div class="docktitle">
          <h2 class="dockname">アイテム</h2>
          <button type="button" class="dockbtn" aria-label="フロート"><svg viewBox="0 0 12 12"><rect x="2.500" y="5" width="4.500" height="4.500" rx="1"/><path d="M5 5V3.500q0-1 1-1h2.500q1 0 1 1V6q0 1-1 1H7"/></svg></button>
          <button type="button" class="dockbtn" aria-label="閉じる"><svg class="bold" viewBox="0 0 12 12"><path d="M3 3l6 6M9 3L3 9"/></svg></button>
        </div>
        <div class="tree">
          <table class="treetable">
            <thead><tr>
              <th class="icol" aria-label="表示"><svg class="eye" viewBox="0 0 18 14"><path d="M1 7.500Q8-1.500 17 7q-8 8-16 .5z" fill="#f7f7f7" stroke="#888"/><path d="M2 4q6-5 13-1" fill="none" stroke="#999"/><circle cx="8.500" cy="6.500" r="3.700" fill="#777"/><circle cx="8.500" cy="6.500" r="1.700" fill="#222"/><path d="M3 11q6 3 12-.5" fill="none" stroke="#aaa"/></svg></th>
              <th class="icol" aria-label="ロック"><svg class="padlock" viewBox="0 0 14 17"><path d="M3 9V5.500a4 4 0 0 1 8 0V9" fill="none" stroke="#888" stroke-width="2.200"/><path d="M3 9V5.500a4 4 0 0 1 8 0V9" fill="none" stroke="#eee" stroke-width=".7"/><rect x=".5" y="8" width="13" height="8.500" rx="1" fill="#666"/></svg></th>
              <th>アイテム</th>
            </tr></thead>
          </table>
        </div>
      </section>
      <div class="splitter"><span class="grip flat"></span></div>
      <section class="dock props">
        <div class="tabs" role="tablist">
          <button type="button" class="tab active t-layout" role="tab" aria-selected="true">レイアウト</button>
          <button type="button" class="tab t-props" role="tab">アイテムプロパティ</button>
          <button type="button" class="tab t-guides" role="tab">ガイド</button>
          <button type="button" class="tab t-atlas" role="tab">地図帳</button>
        </div>
        <div class="docktitle low">
          <h2 class="dockname">レイアウト</h2>
          <button type="button" class="dockbtn" aria-label="フロート"><svg viewBox="0 0 12 12"><rect x="2.500" y="5" width="4.500" height="4.500" rx="1"/><path d="M5 5V3.500q0-1 1-1h2.500q1 0 1 1V6q0 1-1 1H7"/></svg></button>
          <button type="button" class="dockbtn" aria-label="閉じる"><svg class="bold" viewBox="0 0 12 12"><path d="M3 3l6 6M9 3L3 9"/></svg></button>
        </div>
        <div class="scroller">
          <form class="form">
            <h3 class="grouphead"><button type="button" class="fold"><span class="tri big"></span>一般設定</button></h3>
            <div class="group refmap">
              <label for="refmap">参照マップ</label>
              <span class="combo"><select id="refmap"><option></option></select></span>
            </div>
            <h3 class="grouphead"><button type="button" class="fold"><span class="tri big"></span>ガイドとグリッド</button></h3>
            <div class="group grid">
              <label class="full" for="spacing">グリッド間隔</label>
              <div class="spin"><input id="spacing" type="text" value="10.00"><span class="steps"><button type="button" aria-label="増やす"><span class="tri up"></span></button><button type="button" aria-label="減らす"><span class="tri down"></span></button></span></div>
              <span class="combo"><select aria-label="グリッド間隔の単位"><option>mm</option></select></span>
              <label class="full" for="offx">グリッドオフセット</label>
              <div class="pair">
                <div class="spin"><input id="offx" type="text" value="x: 0.00"><span class="steps"><button type="button" aria-label="増やす"><span class="tri up"></span></button><button type="button" aria-label="減らす" disabled><span class="tri down pale"></span></button></span></div>
                <div class="spin"><input aria-label="グリッドオフセット y" type="text" value="y: 0.00"><span class="steps"><button type="button" aria-label="増やす"><span class="tri up"></span></button><button type="button" aria-label="減らす" disabled><span class="tri down pale"></span></button></span></div>
              </div>
              <span class="combo"><select aria-label="オフセットの単位"><option>mm</option></select></span>
              <label class="full" for="snap">スナップ許容量</label>
              <div class="spin full"><input id="snap" type="text" value="5 px"><span class="steps"><button type="button" aria-label="増やす"><span class="tri up"></span></button><button type="button" aria-label="減らす"><span class="tri down"></span></button></span></div>
            </div>
            <h3 class="grouphead"><button type="button" class="fold"><span class="tri big"></span>エクスポート設定</button></h3>
            <div class="group export">
              <label for="dpi">エクスポート解像度</label>
              <div class="spin"><input id="dpi" type="text" value="300 dpi"><span class="steps"><button type="button" aria-label="増やす"><span class="tri up"></span></button><button type="button" aria-label="減らす"><span class="tri down"></span></button></span></div>
            </div>
          </form>
          <div class="scrollbar">
            <button type="button" class="sbtn" aria-label="上へ"><span class="tri up"></span></button>
            <div class="track"><div class="thumb"></div></div>
            <button type="button" class="sbtn" aria-label="下へ"><span class="tri down"></span></button>
          </div>
        </div>
      </section>
    </aside>
  </main>

  <footer class="status">
    <span class="size">幅: 280 mm 高さ: 190 mm</span>
    <span class="pos">x: 290 mm</span>
    <span class="pos">y: 200 mm</span>
    <span class="pageno">ページ: 1</span>
    <div class="zoombox">
      <input type="text" value="53.8%" aria-label="ズーム率">
      <button type="button" aria-label="ズーム一覧"><span class="tri down"></span></button>
    </div>
    <input class="slider" type="range" min="0" max="100" value="4" aria-label="ズーム">
  </footer>
</div>
<script src="rulers.js"></script>
</body>
</html>
```
FILE: styles.css
```css
* { box-sizing: border-box; }
html, body { height: 100%; margin: 0; }
body {
  font-family: "Liberation Sans", "Noto Sans CJK JP", sans-serif;
  font-size: 11px;
  line-height: 16px;
  font-feature-settings: "palt";
  color: #111;
  background: #efefef;
  overflow: hidden;
}
button, input, select { font: inherit; font-feature-settings: inherit; color: inherit; }
button { padding: 0; border: 0; background: none; }
h1, h2, h3 { margin: 0; font-size: inherit; font-weight: normal; }
svg { display: block; flex: none; }
.sprite { position: absolute; width: 0; height: 0; }

.window { display: flex; flex-direction: column; height: 100vh; border-bottom: 1px solid #b4b6c2; }

.titlebar { display: flex; align-items: center; height: 26px; padding: 0 2px 2px 1px; background: #f3f3f3; flex: none; }
.logo { width: 18px; height: 18px; }
.title { flex: 1; padding: 1px 0 0 4px; font-size: 12px; }
.winbtns { display: flex; }
.winbtn { display: grid; place-items: center; width: 51px; height: 24px; }
.winbtn svg { width: 12px; height: 12px; fill: none; stroke: #222; stroke-width: 1.1; }

.menubar { display: flex; gap: 16px; height: 16px; padding-left: 12px; flex: none; }
.menu { line-height: 16px; white-space: nowrap; }

.toolbar {
  display: flex; align-items: center; height: 42px; padding-left: 5px; flex: none;
  background: linear-gradient(#fbfbfb, #efefef);
  border-top: 1px solid #fff; border-bottom: 1px solid #c2c2c2;
}
.toolbar.first { height: 44px; border-top-color: #d0d0d0; }
.grip { width: 6px; height: 20px; margin-right: 2px; flex: none; background: radial-gradient(circle, #c4c4c4 35%, transparent 45%) 0 0 / 3px 3px; }
.grip.mid { margin: 0 4px 0 7px; }
.grip.flat { width: 18px; height: 6px; margin: 0; }
.tool { display: grid; place-items: center; width: 37px; height: 36px; flex: none; }
.tool svg, .vtool svg { width: 26px; height: 26px; overflow: visible; }
.sep { width: 1px; height: 22px; margin: 0 3px; background: #d2d2d2; flex: none; }
.more { display: grid; place-items: center; width: 11px; height: 36px; }
.pagecombo { display: flex; width: 80px; height: 33px; border: 1px solid #b5b5b5; border-radius: 3px; flex: none; background: #fbfbfb; }
.pageinput { width: 57px; min-width: 0; padding: 2px 5px 0; border: 0; border-right: 1px solid #c9c9c9; background: #efefef; color: #8a8a8a; font-size: 11px; }
.pagedrop { display: grid; place-items: center; flex: 1; }

.tri { display: block; width: 0; height: 0; border: 4px solid transparent; }
.tri.down { border-top: 4px solid #555; border-bottom: 0; }
.tri.up { border-bottom: 4px solid #555; border-top: 0; }
.tri.big { border-width: 8px 6px 0; border-top-color: #333; }
.tri.down.pale { border-top-color: #a5a5a5; }

.work { display: flex; flex: 1; min-height: 0; }
.toolbox { width: 44px; flex: none; overflow: hidden; padding-top: 6px; border-right: 1px solid #b9b9b9; background: linear-gradient(90deg, #fbfbfb, #efefef); }
.toolbox .grip { display: block; margin-left: 14px; }
.tools { display: flex; flex-direction: column; padding: 3px 0 0 5px; }
.vtool { display: grid; place-items: center; width: 34px; height: 34px; margin-bottom: 2px; border: 1px solid transparent; border-radius: 3px; flex: none; }
.vtool:nth-child(3n) { margin-bottom: 1px; }
.vtool.pressed { background: #dcdcdc; border-color: #b3b3b3; }

.view { display: grid; grid-template: 19px 1fr / 19px 1fr; flex: 1; min-width: 0; min-height: 0; overflow: hidden; border-bottom: 1px solid #c9c9c9; }
.view svg { width: 100%; height: 100%; overflow: hidden; font-size: 11px; fill: #444; }
.ruler-h { grid-column: 1 / 3; }
.ruler-v, .canvas { min-height: 0; }
.canvas { background: #d6d6d6; }
.tick { stroke: #333; shape-rendering: crispEdges; }
.marker { stroke: #e22; shape-rendering: crispEdges; }
.sheet { fill: #fff; }
.sheet-shadow { fill: #969696; }
.dot { fill: #e2e2e2; }
.draft { fill: none; stroke: #ec8d8d; shape-rendering: crispEdges; }
.cross { stroke: #e84c4c; }

.side { display: flex; flex-direction: column; width: 448px; flex: none; min-height: 0; padding: 2px 0 0 7px; }
.dock { display: flex; flex-direction: column; }
.props { flex: 1; min-height: 0; }
.tabs { display: flex; align-items: flex-end; height: 24px; border-bottom: 1px solid #b9b9b9; flex: none; }
.tab { height: 21px; padding-top: 1px; border: 1px solid #b9b9b9; border-left: 0; border-bottom: 0; border-radius: 2px 2px 0 0; background: #dcdcdc; white-space: nowrap; }
.tab.active { height: 24px; margin-bottom: -1px; border-left: 1px solid #b9b9b9; background: #f3f3f3; }
.t-items { width: 65px; }
.t-history { width: 75px; }
.t-layout { width: 73px; }
.t-props { width: 109px; }
.t-guides { width: 55px; }
.t-atlas { width: 62px; }
.docktitle { display: flex; align-items: center; gap: 3px; height: 23px; padding: 0 2px 0 5px; flex: none; }
.docktitle.low { height: 29px; padding-bottom: 3px; }
.dockname { flex: 1; }
.dockbtn { display: grid; place-items: center; width: 13px; height: 13px; border: 1px solid #777; border-radius: 3px; }
.dockbtn svg { width: 11px; height: 11px; fill: none; stroke: #666; }
.dockbtn .bold { stroke: #555; stroke-width: 2; }

.tree { height: 292px; margin-right: 1px; border: 1px solid #c6c6c6; background: #fff; }
.treetable { width: 100%; border-collapse: collapse; table-layout: fixed; }
.treetable th { height: 21px; padding: 0 0 2px 3px; font-weight: normal; text-align: left; background: linear-gradient(#fcfcfc, #ececec); border-bottom: 1px solid #adadad; }
.treetable .icol { width: 33px; padding: 2px 0 0 3px; border-right: 1px solid #ccc; }
.eye { width: 17px; height: 14px; }
.padlock { width: 14px; height: 17px; margin-left: 2px; }
.splitter { display: flex; justify-content: center; height: 6px; flex: none; }

.scroller { display: flex; flex: 1; min-height: 0; overflow: hidden; }
.form { flex: 1; min-width: 0; padding: 11px 12px 0 14px; }
.grouphead { height: 22px; font-weight: bold; }
.fold { display: flex; align-items: center; gap: 10px; height: 22px; padding-left: 1px; font-weight: bold; }
.group { border: 1px solid #d6d6d6; border-radius: 2px; background: #ebebeb; margin-bottom: 4px; padding: 0 15px 0 14px; }
.refmap { display: grid; grid-template-columns: auto 1fr; align-items: center; gap: 8px; padding-top: 10px; padding-bottom: 15px; }
.grid { display: grid; grid-template-columns: 1fr 1fr; column-gap: 7px; align-items: center; padding-top: 8px; padding-bottom: 15px; }
.grid label { height: 16px; margin-bottom: 4px; }
.grid .combo + label { margin-top: 6px; }
.full { grid-column: 1 / 3; }
.pair { display: grid; gap: 8px; }
.export { display: grid; grid-template-columns: 1fr 1fr; column-gap: 7px; align-items: center; padding-top: 12px; }

.combo { position: relative; display: block; }
.combo select { display: block; width: 100%; height: 25px; padding: 0 5px; border: 1px solid #b3b3b3; border-radius: 3px; background: linear-gradient(#fdfdfd, #eee); appearance: none; }
.combo::after { content: ""; position: absolute; right: 8px; top: 10px; border: 4px solid transparent; border-top-color: #555; border-bottom: 0; pointer-events: none; }
.spin { display: flex; height: 23px; border: 1px solid #b3b3b3; border-radius: 3px; background: #fff; overflow: hidden; }
.spin input { flex: 1; min-width: 0; padding: 0 5px; border: 0; background: none; }
.steps { display: flex; flex-direction: column; width: 16px; border-left: 1px solid #c4c4c4; background: #fafafa; }
.steps button { display: grid; place-items: center; flex: 1; }

.scrollbar { display: flex; flex-direction: column; width: 16px; border-left: 1px solid #cfcfcf; flex: none; }
.sbtn { display: grid; place-items: center; height: 15px; background: #fafafa; border-bottom: 1px solid #cfcfcf; flex: none; }
.sbtn:last-child { border-top: 1px solid #cfcfcf; border-bottom: 0; }
.track { flex: 1; background: #e3e3e3; }
.thumb { height: 36%; background: #fafafa; border-bottom: 1px solid #c6c6c6; }

.status { display: flex; align-items: center; height: 30px; padding: 1px 2px 0 7px; flex: none; }
.size { flex: 1; }
.pos { width: 118px; }
.pageno { width: 118px; }
.zoombox { display: flex; width: 150px; height: 24px; border: 1px solid #b3b3b3; border-radius: 3px; background: #fff; }
.zoombox input { flex: 1; min-width: 0; padding: 0 4px; border: 0; background: none; }
.zoombox button { display: grid; place-items: center; width: 23px; border-left: 1px solid #c9c9c9; background: #f8f8f8; }
.slider { appearance: none; width: 108px; height: 16px; margin: 0 0 0 9px; background: none; }
.slider::-webkit-slider-runnable-track { height: 6px; border: 1px solid #b0b0b0; border-radius: 2px; background: linear-gradient(90deg, #2b7cd0 6px, #dcdcdc 6px); }
.slider::-webkit-slider-thumb { appearance: none; width: 14px; height: 14px; margin-top: -5px; border: 1px solid #a0a0a0; border-radius: 3px; background: #fcfcfc; }
```
FILE: rulers.js
```js
const NS = 'http://www.w3.org/2000/svg';
const SCALE = 3.078;            // screen pixels per millimetre
const PAGE = { w: 297, h: 210 };
const ORIGIN = { x: 86, y: 48 }; // page corner inside the canvas
const RULER = { w: 19, h: 19 };
const CURSOR = { x: 290, y: 200 };

function add(parent, name, attrs, text) {
  const el = document.createElementNS(NS, name);
  for (const key in attrs) el.setAttribute(key, attrs[key]);
  if (text !== undefined) el.textContent = text;
  parent.appendChild(el);
}

function tickLength(mm) {
  if (mm % 20 === 0) return 17;
  return mm % 10 === 0 ? 7 : 5;
}

function drawHorizontal(svg) {
  const start = RULER.w + ORIGIN.x;
  const width = svg.getBoundingClientRect().width;
  for (let mm = -28; start + mm * SCALE < width; mm += 2) {
    const x = Math.round(start + mm * SCALE) + 0.5;
    add(svg, 'line', { class: 'tick', x1: x, x2: x, y1: RULER.h - tickLength(mm), y2: RULER.h });
    if (mm % 20 === 0) add(svg, 'text', { x: x + 1, y: 11 }, mm < 0 ? '\u2212' + -mm : mm);
  }
  const c = Math.round(start + CURSOR.x * SCALE) - 0.5;
  add(svg, 'line', { class: 'marker', x1: c, x2: c, y1: 2, y2: RULER.h });
}

function drawVertical(svg) {
  const height = svg.getBoundingClientRect().height;
  for (let mm = -14; ORIGIN.y + mm * SCALE < height; mm += 2) {
    const y = Math.round(ORIGIN.y + mm * SCALE) - 0.5;
    add(svg, 'line', { class: 'tick', x1: 18 - tickLength(mm), x2: 18, y1: y, y2: y });
    if (mm % 20 === 0) {
      add(svg, 'text', { 'text-anchor': 'end', transform: `translate(10 ${y + 3}) rotate(-90)` }, mm);
    }
  }
  const c = Math.round(ORIGIN.y + CURSOR.y * SCALE) - 0.5;
  add(svg, 'line', { class: 'marker', x1: 0, x2: 18, y1: c, y2: c });
}

function drawCanvas(svg) {
  const w = Math.round(PAGE.w * SCALE);
  const h = Math.round(PAGE.h * SCALE);
  add(svg, 'rect', { class: 'sheet-shadow', x: ORIGIN.x + 6, y: ORIGIN.y + 6, width: w, height: h });
  add(svg, 'rect', { class: 'sheet', x: ORIGIN.x, y: ORIGIN.y, width: w, height: h });
  for (let gx = 0; gx < PAGE.w; gx += 10) {
    for (let gy = 0; gy < PAGE.h; gy += 10) {
      add(svg, 'rect', {
        class: 'dot', width: 2, height: 1,
        x: Math.round(ORIGIN.x + gx * SCALE) - 1, y: Math.round(ORIGIN.y + gy * SCALE)
      });
    }
  }
  const left = Math.round(ORIGIN.x + 10 * SCALE) - 0.5;
  const top = Math.round(ORIGIN.y + 10 * SCALE) - 0.5;
  const right = Math.round(ORIGIN.x + CURSOR.x * SCALE) - 0.5;
  const bottom = Math.round(ORIGIN.y + CURSOR.y * SCALE) - 0.5;
  add(svg, 'rect', { class: 'draft', x: left, y: top, width: right - left, height: bottom - top });
  add(svg, 'path', { class: 'cross', d: `M${right - 4} ${bottom - 4}l8 8m0-8l-8 8` });
}

function draw() {
  [['ruler-h', drawHorizontal], ['ruler-v', drawVertical], ['canvas', drawCanvas]].forEach(([id, fn]) => {
    const svg = document.getElementById(id);
    svg.replaceChildren();
    fn(svg);
  });
}

draw();
window.addEventListener('resize', draw);
```
